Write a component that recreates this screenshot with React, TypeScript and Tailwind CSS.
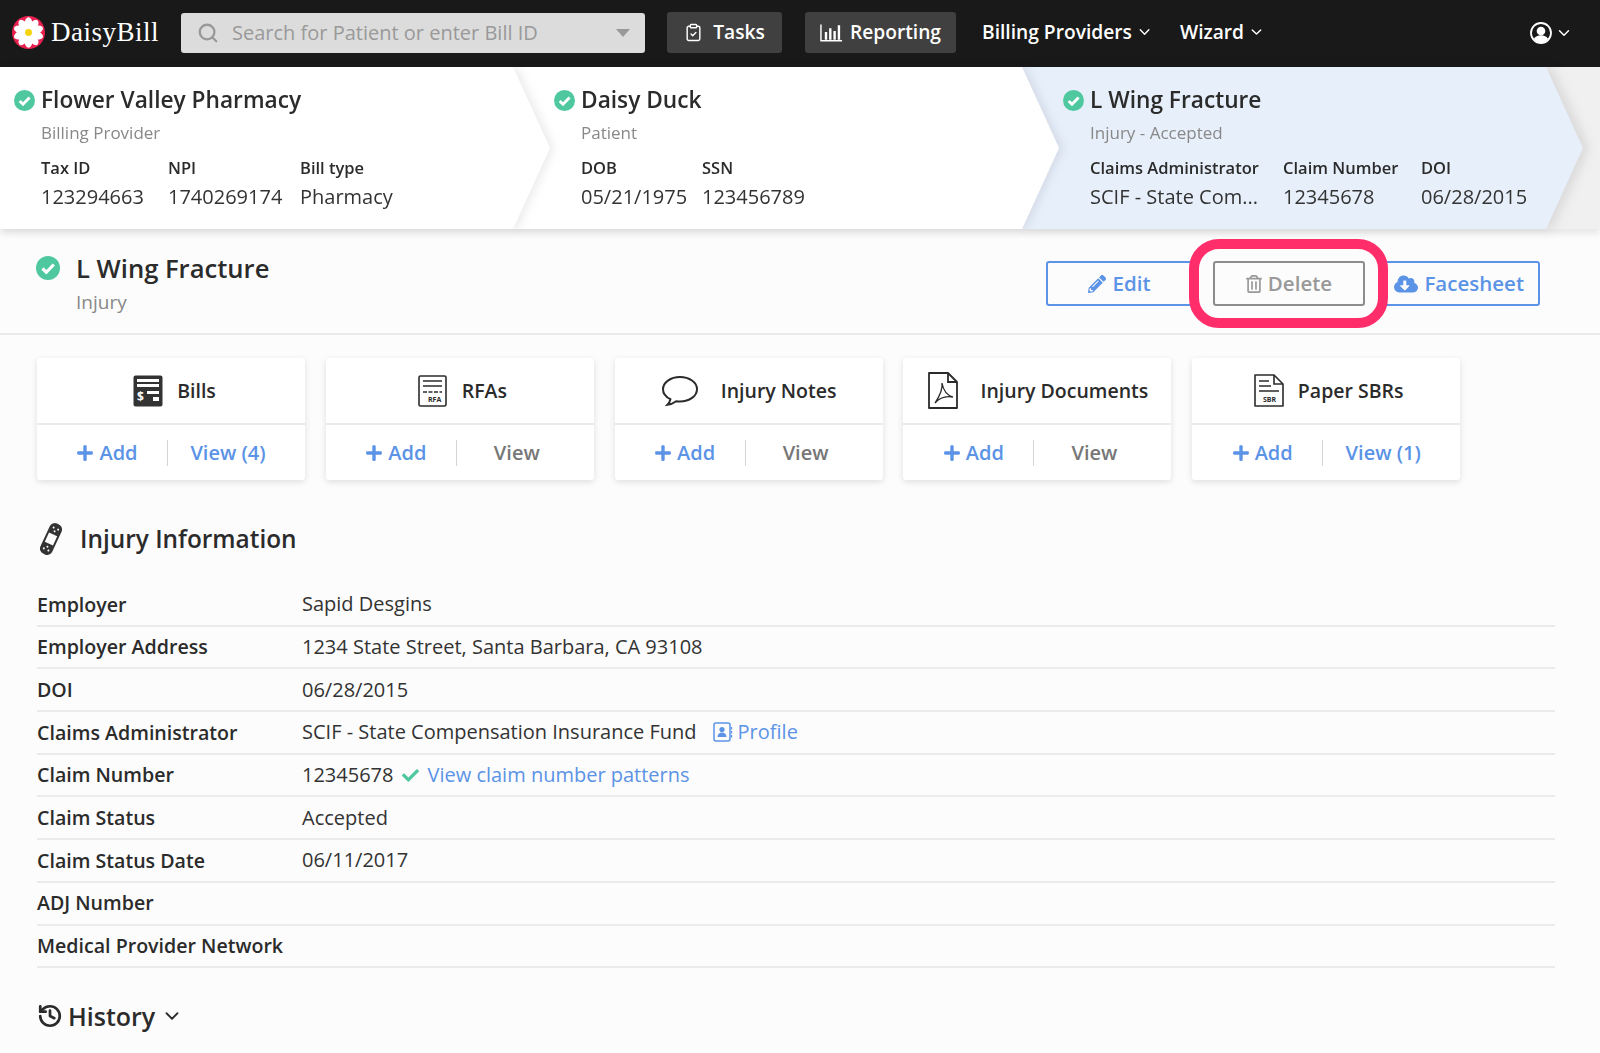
import React from "react";
import { Search, ChevronDown, ClipboardCheck, History } from "lucide-react";
import { FaPencilAlt, FaCloudDownloadAlt, FaPlus, FaCheck, FaRegTrashAlt } from "react-icons/fa";

const Font = "[font-family:'Open_Sans','Lato',sans-serif]";

function CheckDot({ className = "" }: { className?: string }) {
  return (
    <svg viewBox="0 0 24 24" className={className}>
      <circle cx="12" cy="12" r="12" fill="#4fc8a0" />
      <path d="M6.500 12.500l3.800 3.800 7.500-7.800" fill="none" stroke="#fff" strokeWidth="3.200" />
    </svg>
  );
}

function Logo() {
  const petals = Array.from({ length: 10 }, (_, i) => i * 36);
  return (
    <svg viewBox="0 0 34 34" className="w-[33px] h-[33px] shrink-0">
      <circle cx="17" cy="17" r="17" fill="#e8204f" />
      {petals.map((a) => (
        <ellipse key={a} cx="17" cy="8" rx="4" ry="6.600" fill="#fff" transform={`rotate(${a} 17 17)`} />
      ))}
      <circle cx="17" cy="17" r="3.600" fill="#f6d410" />
    </svg>
  );
}

function Field({ label, value, className = "" }: { label: string; value: string; className?: string }) {
  return (
    <div className={className}>
      <div className="text-[16.500px] leading-[22px] font-semibold text-[#2b2b2b] whitespace-nowrap">{label}</div>
      <div className="mt-[6px] text-[20px] leading-[24px] text-[#333] whitespace-nowrap">{value}</div>
    </div>
  );
}

function Crumb({ title, sub, children }: { title: string; sub: string; children: React.ReactNode }) {
  return (
    <>
      <div className="flex items-center h-[32px]">
        <CheckDot className="w-[21px] h-[21px] -ml-[27px] mr-[6px] shrink-0" />
        <div className="text-[22.700px] leading-[32px] font-semibold text-[#2b2b2b] whitespace-nowrap">{title}</div>
      </div>
      <div className="mt-[7px] text-[17px] leading-[20px] text-[#888]">{sub}</div>
      <div className="mt-[14px] flex">{children}</div>
    </>
  );
}

function BillsIcon() {
  return (
    <svg viewBox="0 0 30 32" className="w-[30px] h-[32px]">
      <rect x="0.500" y="0.500" width="29" height="31" rx="2" fill="#333" />
      <path d="M4 4h22v3H4zM4 9h22v3H4zM14 16h12v3H14zM20 22h6v4h-6z" fill="#fff" />
      <text x="4" y="26" fontSize="12" fontWeight="700" fill="#fff">$</text>
    </svg>
  );
}
function RfaIcon() {
  return (
    <svg viewBox="0 0 30 32" className="w-[30px] h-[32px]">
      <rect x="1" y="1" width="27" height="30" rx="1.500" fill="none" stroke="#2b2b2b" strokeWidth="1.600" />
      <path d="M5 6h19M5 11h19" stroke="#2b2b2b" strokeWidth="1.600" />
      <path d="M5 17h19" stroke="#2b2b2b" strokeWidth="1.600" strokeDasharray="4 1.500" />
      <text x="10" y="27" fontSize="7" fontWeight="700" fill="#2b2b2b">RFA</text>
    </svg>
  );
}
function NoteIcon() {
  return (
    <svg viewBox="0 0 38 32" className="w-[38px] h-[32px]">
      <path d="M19 2C9.600 2 2 7.500 2 14.200c0 4.200 3 7.800 7.400 10-.4 2.200-1.600 4.200-3 5.600 3.400-.4 6.600-2 8.800-3.600 1.200.2 2.500.3 3.800.3 9.400 0 17-5.500 17-12.300S28.400 2 19 2z" fill="none" stroke="#2b2b2b" strokeWidth="2" />
    </svg>
  );
}
function PdfIcon() {
  return (
    <svg viewBox="0 0 32 37" className="w-[32px] h-[37px]">
      <path d="M2 1h19l9 9v26H2z" fill="none" stroke="#2b2b2b" strokeWidth="1.800" strokeLinejoin="round" />
      <path d="M21 1v9h9" fill="none" stroke="#2b2b2b" strokeWidth="1.800" />
      <path d="M15 11c1 6 4 12 11 14-6-1-13 0-18 6 4-6 8-13 7-20z" fill="none" stroke="#2b2b2b" strokeWidth="1.300" />
    </svg>
  );
}
function SbrIcon() {
  return (
    <svg viewBox="0 0 30 33" className="w-[30px] h-[33px]">
      <path d="M1 1h19l9 9v22H1z" fill="none" stroke="#2b2b2b" strokeWidth="1.600" strokeLinejoin="round" />
      <path d="M20 1v9h9" fill="none" stroke="#2b2b2b" strokeWidth="1.600" />
      <path d="M5 7h10M5 12h12M5 17h20" stroke="#2b2b2b" strokeWidth="1.600" />
      <text x="9" y="28" fontSize="7" fontWeight="700" fill="#2b2b2b">SBR</text>
    </svg>
  );
}
function ProfileIcon() {
  return (
    <svg viewBox="0 0 20 20" className="w-[20px] h-[20px] inline-block mr-[5px]">
      <rect x="1" y="1" width="16" height="18" rx="2" fill="none" stroke="#5b93e6" strokeWidth="1.500" />
      <circle cx="9" cy="7.500" r="2.600" fill="#5b93e6" />
      <path d="M4.500 15c0-3 2-4.500 4.500-4.500s4.500 1.500 4.500 4.500z" fill="#5b93e6" />
      <path d="M18.500 5v2.500M18.500 9v2.500M18.500 13v2.500" stroke="#5b93e6" strokeWidth="1.300" />
    </svg>
  );
}
function ChartIcon() {
  return (
    <svg viewBox="0 0 24 18" className="w-[23px] h-[18px]">
      <path d="M1 0v17h22" fill="none" stroke="#fff" strokeWidth="1.500" />
      <path d="M5 8h2.500v8H5zM9.500 4H12v12H9.500zM14 7h2.500v9H14zM18.500 1H21v15h-2.500z" fill="#fff" />
    </svg>
  );
}
function UserIcon() {
  return (
    <svg viewBox="0 0 22 22" className="w-[22px] h-[22px]">
      <circle cx="11" cy="11" r="10" fill="none" stroke="#fff" strokeWidth="1.800" />
      <circle cx="11" cy="9" r="4.300" fill="#fff" />
      <path d="M3.800 17c1.500-2.500 4-3.700 7.200-3.700s5.700 1.200 7.200 3.700c-1.800 2.300-4.300 3.800-7.200 3.800s-5.400-1.500-7.200-3.800z" fill="#fff" />
    </svg>
  );
}
function BandAidIcon() {
  return (
    <svg viewBox="0 0 28 34" className="w-[28px] h-[34px] mr-[15px] shrink-0">
      <g transform="rotate(25 14 17)">
        <rect x="7.500" y="0.500" width="13" height="33" rx="5.500" fill="#333" />
        <rect x="9.500" y="12" width="9" height="10" fill="#fcfcfc" />
        <circle cx="11.500" cy="5.500" r="1" fill="#fcfcfc" />
        <circle cx="16.500" cy="5.500" r="1" fill="#fcfcfc" />
        <circle cx="14" cy="8.500" r="1" fill="#fcfcfc" />
        <circle cx="11.500" cy="28.500" r="1" fill="#fcfcfc" />
        <circle cx="16.500" cy="28.500" r="1" fill="#fcfcfc" />
        <circle cx="14" cy="25.500" r="1" fill="#fcfcfc" />
      </g>
    </svg>
  );
}

const cards = [
  { name: "Bills", icon: <BillsIcon />, view: "View (4)", on: true, cls: "gap-[14px] pl-[7px]" },
  { name: "RFAs", icon: <RfaIcon />, view: "View", on: false, cls: "gap-[14px] pl-[5px]" },
  { name: "Injury Notes", icon: <NoteIcon />, view: "View", on: false, cls: "gap-[22px]" },
  { name: "Injury Documents", icon: <PdfIcon />, view: "View", on: false, cls: "gap-[22px]" },
  { name: "Paper SBRs", icon: <SbrIcon />, view: "View (1)", on: true, cls: "gap-[14px] pl-[5px]" },
];

const rows: [string, React.ReactNode][] = [
  ["Employer", "Sapid Desgins"],
  ["Employer Address", "1234 State Street, Santa Barbara, CA 93108"],
  ["DOI", "06/28/2015"],
  [
    "Claims Administrator",
    <span className="flex items-center">
      SCIF - State Compensation Insurance Fund
      <span className="ml-[16px] flex items-center text-[#5b93e6]"><ProfileIcon />Profile</span>
    </span>,
  ],
  [
    "Claim Number",
    <span className="flex items-center">
      12345678
      <FaCheck className="ml-[8px] mr-[7px] text-[#4fc8a0] w-[19px] h-[17px]" />
      <span className="text-[#5b93e6]">View claim number patterns</span>
    </span>,
  ],
  ["Claim Status", "Accepted"],
  ["Claim Status Date", "06/11/2017"],
  ["ADJ Number", ""],
  ["Medical Provider Network", ""],
];

export default function App() {
  return (
    <div className={`${Font} w-[1600px] h-[1053px] overflow-hidden bg-[#fcfcfc] text-[#333]`}>
      <header className="h-[67px] pb-[2px] bg-[#191919] flex items-center text-white">
        <div className="ml-[12px] w-[169px] flex items-center gap-[6px]">
          <Logo />
          <span className="text-[27px] [font-family:'Liberation_Serif',serif] tracking-[0.500px] whitespace-nowrap">DaisyBill</span>
        </div>
        <div className="w-[464px] h-[40px] rounded-[3px] bg-[#dcdcdc] flex items-center pl-[16px] pr-[15px] text-[#999]">
          <Search className="w-[22px] h-[22px]" strokeWidth={2.500} />
          <span className="ml-[13px] text-[20px] flex-1 whitespace-nowrap">Search for Patient or enter Bill ID</span>
          <span className="w-0 h-0 border-x-[7px] border-x-transparent border-t-[8px] border-t-[#999]" />
        </div>
        <div className="ml-[22px] w-[115px] h-[41px] rounded-[3px] bg-[#404040] flex items-center justify-center gap-[10px] text-[19.200px] font-semibold">
          <ClipboardCheck className="w-[19px] h-[21px]" strokeWidth={1.800} />Tasks
        </div>
        <div className="ml-[23px] w-[151px] h-[41px] rounded-[3px] bg-[#404040] flex items-center justify-center gap-[7px] text-[19.200px] font-semibold">
          <ChartIcon />Reporting
        </div>
        <div className="ml-[26px] w-[171px] flex items-center gap-[4px] text-[19.200px] font-semibold whitespace-nowrap">
          Billing Providers<ChevronDown className="w-[18px] h-[18px]" strokeWidth={2} />
        </div>
        <div className="ml-[27px] w-[85px] flex items-center gap-[4px] text-[19.200px] font-semibold">
          Wizard<ChevronDown className="w-[18px] h-[18px]" strokeWidth={2} />
        </div>
        <div className="ml-[265px] flex items-center gap-[3px]">
          <UserIcon /><ChevronDown className="w-[18px] h-[18px]" strokeWidth={2} />
        </div>
      </header>

      <section className="relative h-[162px] bg-[#f0f0f0] flex shadow-[0_5px_6px_rgba(0,0,0,0.08)]">
        <div className="relative z-30 [filter:drop-shadow(4px_0_5px_rgba(0,0,0,0.08))]">
          <div className="w-[550px] h-[162px] bg-white pl-[41px] pt-[17px] [clip-path:polygon(0_0,513px_0,550px_50%,513px_100%,0_100%)]">
            <Crumb title="Flower Valley Pharmacy" sub="Billing Provider">
              <Field label="Tax ID" value="123294663" className="w-[127px]" />
              <Field label="NPI" value="1740269174" className="w-[132px]" />
              <Field label="Bill type" value="Pharmacy" />
            </Crumb>
          </div>
        </div>
        <div className="relative z-20 -ml-[37px] [filter:drop-shadow(4px_0_5px_rgba(0,0,0,0.08))]">
          <div className="w-[546px] h-[162px] bg-white pl-[68px] pt-[17px] [clip-path:polygon(0_0,509px_0,546px_50%,509px_100%,0_100%)]">
            <Crumb title="Daisy Duck" sub="Patient">
              <Field label="DOB" value="05/21/1975" className="w-[121px]" />
              <Field label="SSN" value="123456789" />
            </Crumb>
          </div>
        </div>
        <div className="relative z-10 -ml-[37px] [filter:drop-shadow(5px_0_6px_rgba(0,0,0,0.1))]">
          <div className="w-[561px] h-[162px] bg-[#e7effa] pl-[68px] pt-[17px] [clip-path:polygon(0_0,524px_0,561px_50%,524px_100%,0_100%)]">
            <Crumb title="L Wing Fracture" sub="Injury - Accepted">
              <Field label="Claims Administrator" value="SCIF - State Com..." className="w-[193px]" />
              <Field label="Claim Number" value="12345678" className="w-[138px]" />
              <Field label="DOI" value="06/28/2015" />
            </Crumb>
          </div>
        </div>
      </section>

      <section className="relative mt-[8px] h-[98px] border-b-2 border-[#eaeaea] flex justify-between pl-[36px] pr-[60px] pt-[16px]">
        <div className="flex">
          <CheckDot className="w-[24px] h-[24px] mt-[3px] mr-[16px]" />
          <div>
            <div className="text-[25.600px] leading-[32px] font-semibold text-[#2b2b2b]">L Wing Fracture</div>
            <div className="mt-[5px] text-[19px] leading-[24px] text-[#888]">Injury</div>
          </div>
        </div>
        <div className="flex mt-[8px] h-[45px] text-[20.500px] font-semibold">
          <div className="w-[150px] rounded-[3px] border-2 border-[#5b93e6] text-[#5b93e6] flex items-center justify-center pr-[3px] gap-[6px]">
            <FaPencilAlt className="w-[18px] h-[18px]" />Edit
          </div>
          <div className="relative z-10 w-[152px] ml-[17px] rounded-[3px] border-2 border-[#8c8c8c] text-[#999] bg-[#fcfcfc] flex items-center justify-center gap-[6px]">
            <FaRegTrashAlt className="w-[16px] h-[18px]" />Delete
            <div className="absolute -left-[26px] -top-[24px] w-[199px] h-[89px] rounded-[30px] border-[10px] border-[#ff2d6a]" />
          </div>
          <div className="w-[160px] ml-[15px] rounded-[3px] border-2 border-[#5b93e6] text-[#5b93e6] flex items-center justify-end pr-[14px] gap-[6px]">
            <FaCloudDownloadAlt className="w-[24px] h-[22px]" />Facesheet
          </div>
        </div>
      </section>

      <section className="mt-[23px] ml-[37px] flex gap-[20.800px]">
        {cards.map((c) => (
          <div key={c.name} className="w-[268px] h-[122px] bg-white rounded-[3px] shadow-[0_2px_6px_rgba(0,0,0,0.12)]">
            <div className={`h-[67px] border-b-2 border-[#ebebeb] flex items-center justify-center ${c.cls} text-[19.500px] font-semibold text-[#2b2b2b]`}>
              {c.icon}{c.name}
            </div>
            <div className="h-[55px] flex items-center text-[20px] font-semibold">
              <div className="w-[130px] pl-[10px] flex items-center justify-center gap-[5px] text-[#5b93e6]">
                <FaPlus className="w-[18px] h-[18px]" />Add
              </div>
              <div className="w-px h-[26px] bg-[#d5d5d5]" />
              <div className={`w-[120px] text-center ${c.on ? "text-[#5b93e6]" : "text-[#777]"}`}>{c.view}</div>
            </div>
          </div>
        ))}
      </section>

      <section className="mt-[39px] ml-[37px] mr-[45px]">
        <div className="flex items-center h-[40px] text-[24.400px] font-semibold text-[#2b2b2b]">
          <BandAidIcon />
          Injury Information
        </div>
        <div className="mt-[25px] text-[20px]">
          {rows.map(([k, v]) => (
            <div key={k} className="h-[42.700px] border-b-2 border-[#ebebeb] flex items-center">
              <div className="w-[265px] text-[19.600px] font-semibold text-[#2b2b2b] whitespace-nowrap">{k}</div>
              <div className="text-[#333]">{v}</div>
            </div>
          ))}
        </div>
        <div className="mt-[29px] flex items-center text-[25px] leading-[38px] font-semibold text-[#2b2b2b]">
          <History className="w-[26px] h-[26px] mr-[5px]" strokeWidth={2.500} />
          History
          <ChevronDown className="ml-[6px] w-[22px] h-[22px]" strokeWidth={2} />
        </div>
      </section>
    </div>
  );
}
